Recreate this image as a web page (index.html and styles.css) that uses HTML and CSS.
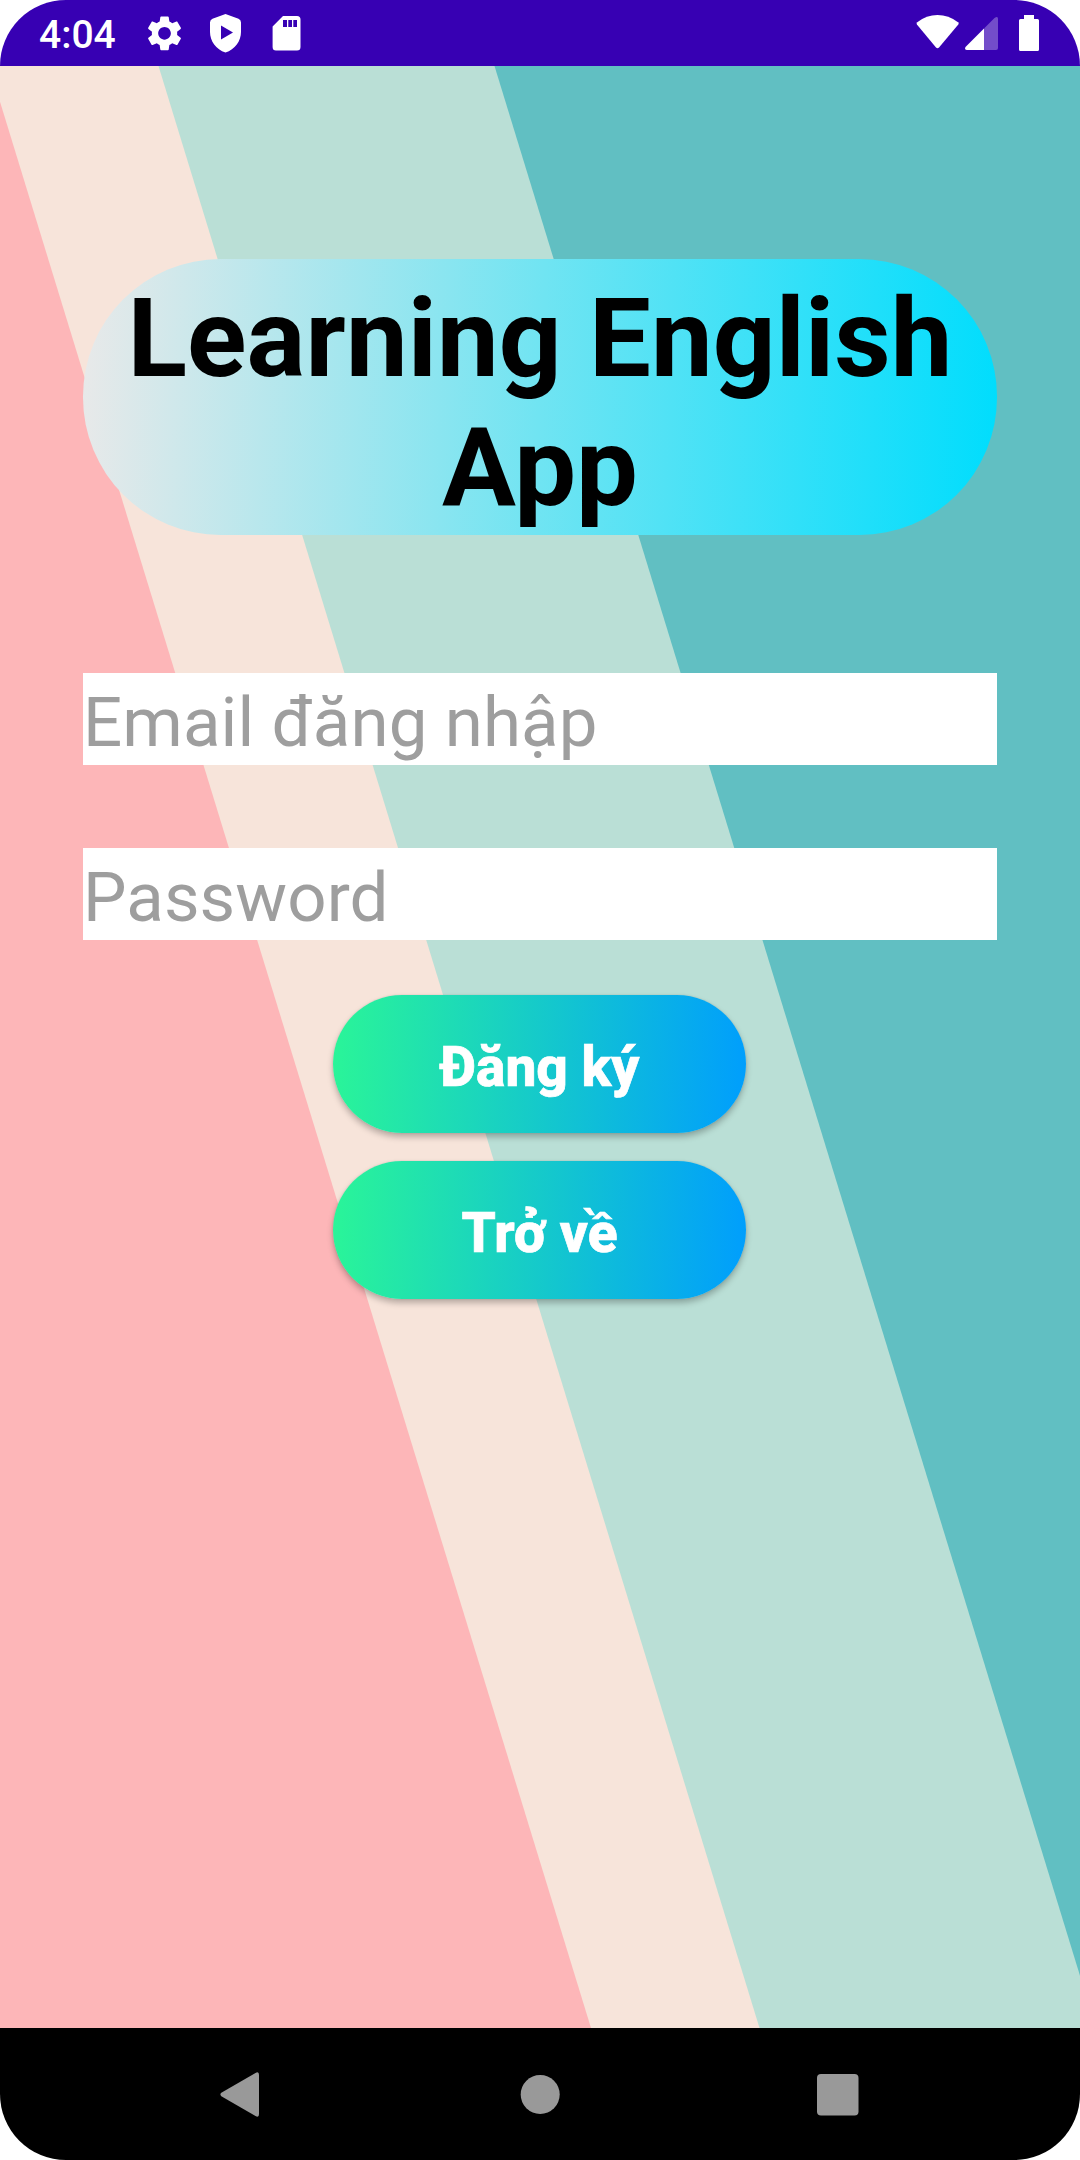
FILE: index.html
```html
<!DOCTYPE html>
<html lang="vi">
<head>
<meta charset="utf-8">
<title>Learning English App</title>
<link rel="stylesheet" href="styles.css">
</head>
<body>
<div class="screen">
  <header class="status-bar">
    <span class="clock">4:04</span>
    <svg class="status-left" width="160" height="66" viewBox="144 0 160 66" fill="#fff">
      <path transform="translate(143.4 12.2) scale(1.76)" d="M19.14 12.94c.04-.3.06-.61.06-.94 0-.32-.02-.64-.07-.94l2.03-1.58c.18-.14.23-.41.12-.61l-1.92-3.32c-.12-.22-.37-.29-.59-.22l-2.39.96c-.5-.38-1.03-.7-1.62-.94l-.36-2.54c-.04-.24-.24-.41-.48-.41h-3.84c-.24 0-.43.17-.47.41l-.36 2.54c-.59.24-1.13.57-1.62.94l-2.39-.96c-.22-.08-.47 0-.59.22L2.74 8.87c-.12.21-.08.47.12.61l2.03 1.58c-.05.3-.09.63-.09.94s.02.64.07.94l-2.03 1.58c-.18.14-.23.41-.12.61l1.92 3.32c.12.22.37.29.59.22l2.39-.96c.5.38 1.03.7 1.62.94l.36 2.54c.05.24.24.41.48.41h3.84c.24 0 .44-.17.47-.41l.36-2.54c.59-.24 1.13-.56 1.62-.94l2.39.96c.22.08.47 0 .59-.22l1.92-3.32c.12-.22.07-.47-.12-.61zM12 15.6c-1.98 0-3.6-1.62-3.6-3.6s1.62-3.6 3.6-3.6 3.6 1.62 3.6 3.6-1.62 3.6-3.6 3.6z"/>
      <path fill-rule="evenodd" d="M225.500 14 238.500 18.700Q241 19.800 241 22.500V32C241 41 235 49.500 225.500 52.500 216 49.500 210 41 210 32V22.500Q210 19.800 212.500 18.700ZM221 25.500V39.500L233 32.500Z"/>
      <path fill-rule="evenodd" d="M283 16H297Q300.500 16 300.500 19.500V47Q300.500 50.500 297 50.500H276Q272.600 50.500 272.600 47V26.500ZM283 20V27H287V20ZM288.300 20V27H292V20ZM293.300 20V27H297V20Z"/>
    </svg>
    <svg class="status-right" width="130" height="66" viewBox="910 0 130 66" fill="#fff">
      <path d="M917.300 22.200Q926.500 15 937.500 15T958 22.200Q959.300 23.300 958.300 24.600L939 47.600Q937.500 49 936 47.600L916.900 24.600Q916 23.300 917.300 22.200Z"/>
      <path opacity=".3" d="M984 28.500 994.500 18Q998 15.500 998 19V48Q998 50 996 50H984Z"/>
      <path d="M984 28.500V50H967Q964 49.500 965.500 47Z"/>
      <path d="M1024 15H1034V19H1037.500Q1039 19 1039 20.500V49.500Q1039 51 1037.500 51H1020.500Q1019 51 1019 49.500V20.500Q1019 19 1020.500 19H1024Z"/>
    </svg>
  </header>

  <main class="content">
    <svg class="stripes" viewBox="0 66 1080 1962" preserveAspectRatio="none">
      <rect y="66" width="1080" height="1962" fill="#61bfc2"/>
      <path fill="#badfd6" d="M0 66H494.500L1096 2028H0Z"/>
      <path fill="#f7e4da" d="M0 66H158.500L759.500 2028H0Z"/>
      <path fill="#fdb6b8" d="M-11 66 591 2028H-11Z"/>
    </svg>
    <h1 class="title">Learning English App</h1>
    <form class="form">
      <input class="field" type="email" placeholder="Email đăng nhập">
      <input class="field" type="password" placeholder="Password">
      <button class="button" type="button">Đăng ký</button>
      <button class="button" type="button">Trở về</button>
    </form>
  </main>

  <nav class="nav-bar">
    <svg width="1080" height="132" viewBox="0 2028 1080 132" fill="#999">
      <path d="M221.300 2092.800 255.500 2073Q259 2071 259 2075V2114Q259 2118 255.500 2116L221.300 2096.200Q219.500 2094.500 221.300 2092.800Z"/>
      <circle cx="540.200" cy="2094.500" r="19.500"/>
      <rect x="817" y="2074" width="41.500" height="41.500" rx="4"/>
    </svg>
  </nav>
</div>
</body>
</html>
```
FILE: styles.css
```css
* {
  box-sizing: border-box;
}

body {
  margin: 0;
  background: #fff;
  font-family: Roboto, "Noto Sans", sans-serif;
}

.screen {
  display: flex;
  flex-direction: column;
  width: 1080px;
  height: 2160px;
  overflow: hidden;
  border-radius: 66px;
}

.status-bar {
  display: flex;
  align-items: center;
  height: 66px;
  padding-left: 39px;
  background: #3700b3;
  color: #fff;
}

.clock {
  width: 105px;
  padding-top: 3px;
  font-size: 39px;
  font-weight: 500;
  line-height: 66px;
}

.status-right {
  margin-left: auto;
  margin-right: 40px;
}

.content {
  position: relative;
  flex: 1;
  padding: 193px 83px 0;
}

.stripes {
  position: absolute;
  inset: 0;
  width: 100%;
  height: 100%;
}

.title {
  position: relative;
  height: 276px;
  margin: 0;
  padding-top: 15px;
  border-radius: 137.5px;
  background: linear-gradient(92deg, #e9e9e9, #70e4f2 50%, #00ddfd);
  color: #000;
  font-size: 110px;
  font-weight: 700;
  line-height: 129px;
  letter-spacing: 0.1px;
  text-align: center;
}

.form {
  position: relative;
  display: flex;
  flex-direction: column;
  align-items: center;
  margin-top: 138px;
}

.field {
  width: 100%;
  height: 92px;
  margin-bottom: 83px;
  padding: 7px 0 0;
  border: 0;
  background: #fff;
  font: 400 69px/81px Roboto, "Noto Sans", sans-serif;
  letter-spacing: 0.1px;
}

.field::placeholder {
  color: #9e9e9e;
  opacity: 1;
}

.field + .button {
  margin-top: -28px;
}

.button {
  width: 413px;
  height: 138px;
  margin-right: 1px;
  margin-bottom: 28px;
  padding: 5px 0 0;
  border: 0;
  border-radius: 69px;
  background: linear-gradient(92deg, #2af598, #009efd);
  box-shadow: 0 4px 6px rgba(0, 0, 0, 0.26), 0 0 2px rgba(0, 0, 0, 0.12);
  color: #fff;
  font: 800 55px/64px Roboto, "Noto Sans", sans-serif;
  -webkit-text-stroke: 0.7px #fff;
}

.nav-bar {
  height: 132px;
  background: #000;
}

.nav-bar svg {
  display: block;
}
```
